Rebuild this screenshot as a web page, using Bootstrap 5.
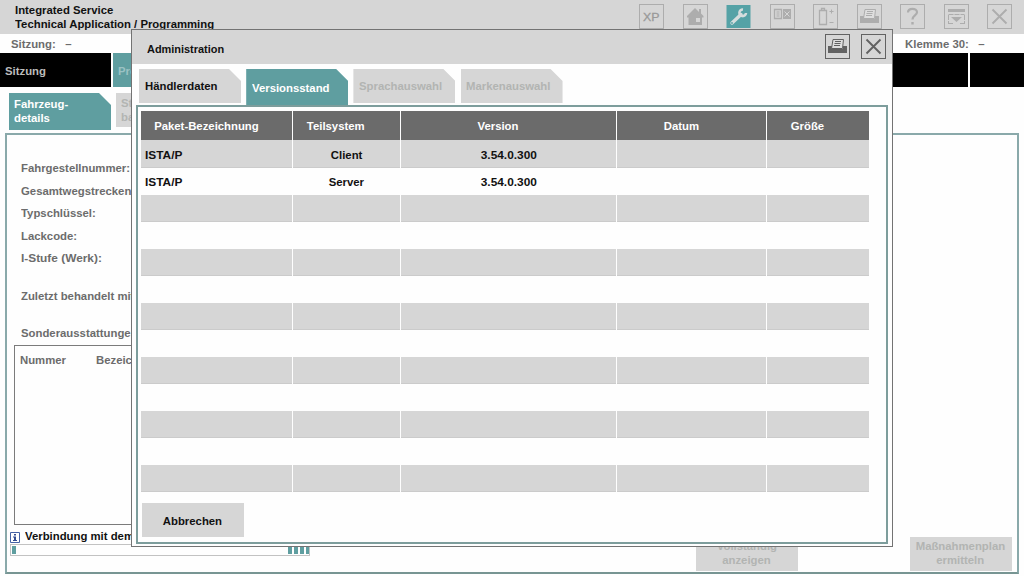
<!DOCTYPE html>
<html lang="de">
<head>
<meta charset="utf-8">
<meta name="viewport" content="width=device-width, initial-scale=1">
<title>Integrated Service – Administration</title>
<link href="https://cdn.jsdelivr.net/npm/bootstrap@5.3.0/dist/css/bootstrap.min.css" rel="stylesheet">
<style>
:root{--teal:#5f9ea0;--grey:#d6d6d6;--line:#7d9d9c}
body{width:1024px;height:576px;background:#fefefe;font:bold 10.5px/14px "Liberation Sans",Arial,sans-serif;color:#111}
.tx{display:inline-block;white-space:nowrap;transform:scaleX(1.08);transform-origin:0 50%}
.text-center .tx,.mid .tx{transform-origin:50% 50%}
.mid .first .tx{transform-origin:0 50%}
.narrow{transform:scaleX(1.04)}
.wide{transform:scaleX(1.13)}
.right-origin{transform-origin:100% 50%}
.dim{color:#6c6c6c}
.off{color:#b2b4b2}
.topbar{height:34px;background:var(--grey);padding:3px 12px 0 15px}
.tools{gap:18.5px;padding-top:1px;color:#adadad}
.tools svg,.dlg-tools svg{width:25px;height:25px;display:block;flex:none}
.info-row{height:19px;padding:3px 39px 0 11px}
.nav-row{height:34px;gap:2px}
.nav-cell{background:#000;color:#bcbcbc;padding:11px 0 0 5px}
.nav-cell.first-cell{width:111px}
.nav-cell.current{width:200px;background:var(--teal);color:#9bc2c4}
.nav-cell.last-cell{width:54px}
.tab-box{width:102px;height:34px;background:var(--grey);clip-path:polygon(0 0,calc(100% - 12px) 0,100% 12px,100% 100%,0 100%)}
.tab-box.on{background:var(--teal);color:#fff}
.side-tabs{height:46px;padding:6px 0 0 9px;gap:5px}
.side-tabs .tab-box{padding:3px 0 0 5px}
.side-tabs .tab-box.on{height:37px;padding-top:4px}
.panel{height:441px;margin:0 5px;border:2px solid #8aa9aa;border-bottom-color:#779593;padding:26px 5px 0 7px}
.fields>div{height:22.5px;padding-left:7px}
.fields>.gap-after{height:37.5px}
.fields>.last-field{height:19px}
.equip{height:180px;width:600px;border:1px solid #7b7b7b;padding:7px 0 0 5px}
.col-num{width:76px}
.status{margin:4px 0 1px -4px}
.status svg{margin:2px 5px 0 0}
.actions{gap:112px;margin-top:12px}
.action-btn{width:102px;height:34px;background:var(--grey);padding:2px 1px 0 0}
.bar-track{width:300px;height:12px;border:1px solid #c2c2c2;padding:1px 0 0 1px;gap:2px;margin-left:-4px}
.bar-track i{width:4px;height:8px;background:var(--teal)}
.bar-track i:last-child{width:3px}
.dlg{left:131px;top:29px;width:762px;height:518px;border:1px solid #737373;background:#fefefe}
.dlg-title{height:34px;background:var(--grey);padding:4px 6px 0 15px}
.dlg-title>.tx{margin-top:8px;height:14px}
.dlg-tools{gap:11px;color:#626262}
.dlg-tabs{height:41px;padding:5px 0 0 7px;gap:5.2px}
.dlg-tabs .tab-box{padding:10px 0 0 6px}
.dlg-tabs .tab-box.off{padding-left:5.500px}
.dlg-tabs .tab-box.on{height:36px;padding-top:12px}
.dlg-body{margin:0 4px;height:439px;border:2px solid var(--line);padding:4px 0 0 3px}
.grid{width:728px;display:grid;grid-template-columns:151px 107px 215px 149px 102px;column-gap:1px;grid-auto-rows:27px;grid-template-rows:29px 28px}
.grid>div{text-align:center;padding-top:8px}
.grid .hd{background:#6b6b6b;color:#fff;padding-right:21px}
.grid .g{background:var(--grey);border-bottom:1px solid #cbcbcb}
.grid .w{padding-top:7px}
.grid .first{text-align:left;padding-left:3.500px}
.cancel{width:102px;height:34px;background:var(--grey);margin:11px 0 0 1px;padding:11px 1px 0 0}
</style>
</head>
<body class="overflow-hidden position-relative m-0">
<svg width="0" height="0" class="d-none">
  <symbol id="printer" viewBox="0 0 25 25"><rect x=".5" y=".5" width="24" height="24" fill="none" stroke="currentColor"/><path d="M3 12h4v3h11v-3h4v7H3z" fill="currentColor"/><path d="M6.500 14.500 8 5.500h10.500l-1 9z" fill="#dedede" stroke="currentColor"/><path d="M10 7.500h6M9.500 9.500h6M9 11.500h6" stroke="currentColor"/></symbol>
  <symbol id="cross" viewBox="0 0 25 25"><rect x=".5" y=".5" width="24" height="24" fill="none" stroke="currentColor"/><path d="m5.500 5.500 14 14m0-14-14 14" stroke="currentColor" stroke-width="1.900"/></symbol>
</svg>
<header class="topbar d-flex justify-content-between">
  <div><div><span class="tx">Integrated Service</span></div><div><span class="tx">Technical Application / Programming</span></div></div>
  <div class="tools d-flex">
    <svg viewBox="0 0 25 25"><rect x=".5" y=".5" width="24" height="24" fill="none" stroke="currentColor"/><text x="4" y="16.500" font-size="11.500" font-weight="normal" textLength="16.500" lengthAdjust="spacingAndGlyphs" fill="#999" stroke="#999" stroke-width=".3">XP</text></svg>
    <svg viewBox="0 0 25 25"><rect x=".5" y=".5" width="24" height="24" fill="none" stroke="currentColor"/><path fill="currentColor" fill-rule="evenodd" d="M12 4 4 12v1.500h1.500V21H19v-7.500h1.500V12L18 9.500V5h-2v3zm1 10h4v4h-4z"/></svg>
    <svg viewBox="0 0 25 25"><path fill="#55a2a6" d="M.5 1h24v23H.5z"/><path d="M6 19 15 10.500" stroke="#d5dddd" stroke-width="3.400" stroke-linecap="round"/><path d="M17 5.500a3.300 3.300 0 1 0 3 3.500" fill="none" stroke="#d5dddd" stroke-width="2.600"/><circle cx="6" cy="19" r=".9" fill="#55a2a6"/></svg>
    <svg viewBox="0 0 25 25"><rect x=".5" y=".5" width="24" height="24" fill="none" stroke="currentColor"/><path d="M4.500 5.500h7v9h-7z" fill="none" stroke="currentColor" stroke-width="1.300"/><path d="M6.500 8h3M6.500 10h3M6.500 12h3" stroke="currentColor"/><path d="M13 5h8v10h-8z" fill="currentColor"/><path d="m14.500 7.500 5 5m0-5-5 5" stroke="#d6d6d6"/></svg>
    <svg viewBox="0 0 25 25"><rect x=".5" y=".5" width="24" height="24" fill="none" stroke="currentColor"/><path d="M6.500 6.500h7v14h-7zM8.500 6V4.500h3V6" fill="none" stroke="currentColor" stroke-width="1.300"/><path d="M16.500 7.500h4M18.500 5.500v4M16.500 18.500h4" stroke="currentColor"/></svg>
    <svg><use href="#printer"/></svg>
    <svg viewBox="0 0 25 25"><rect x=".5" y=".5" width="24" height="24" fill="none" stroke="currentColor"/><path d="M8 8.500C8 3.500 17 3.800 17 8.200c0 3.300-4.500 3.300-4.500 7.300" fill="none" stroke="currentColor" stroke-width="2.200"/><path d="M11.300 18h2.400v2.500h-2.400z" fill="currentColor"/></svg>
    <svg viewBox="0 0 25 25"><rect x=".5" y=".5" width="24" height="24" fill="none" stroke="currentColor"/><path d="M4 5h17v3H4zM7 13h11l-5.500 5z" fill="currentColor"/><path d="M4.500 10.500h16M4.500 11v9M20.500 11v9M4 19.500h5M16 19.500h5" stroke="currentColor" fill="none" stroke-dasharray="5 1"/></svg>
    <svg><use href="#cross"/></svg>
  </div>
</header>
<div class="info-row d-flex justify-content-between dim"><span class="tx">Sitzung: &nbsp; –</span><span class="tx right-origin">Klemme 30: &nbsp; –</span></div>
<nav class="nav-row d-flex"><div class="nav-cell first-cell"><span class="tx">Sitzung</span></div><div class="nav-cell current"><span class="tx">Programmierung</span></div><div class="nav-cell flex-fill"></div><div class="nav-cell last-cell"></div></nav>
<div class="side-tabs d-flex"><div class="tab-box on"><span class="tx">Fahrzeug-</span><br><span class="tx">details</span></div><div class="tab-box off"><span class="tx">Steuergeräte-</span><br><span class="tx">baum</span></div></div>
<main class="panel">
  <div class="fields dim"><div><span class="tx">Fahrgestellnummer:</span></div><div><span class="tx">Gesamtwegstrecken:</span></div><div><span class="tx">Typschlüssel:</span></div><div><span class="tx">Lackcode:</span></div><div class="gap-after"><span class="tx wide">I-Stufe (Werk):</span></div><div class="gap-after"><span class="tx">Zuletzt behandelt mit:</span></div><div class="last-field"><span class="tx">Sonderausstattungen:</span></div></div>
  <div class="equip dim d-flex"><span class="tx col-num">Nummer</span><span class="tx">Bezeichnung</span></div>
  <div class="d-flex justify-content-between">
    <div><div class="status d-flex align-items-center"><svg width="10" height="11" viewBox="0 0 10 11"><path d="M.5.5h9v10h-9z" fill="#fff" stroke="#4561a5"/><path d="M4 2h2v1.500H4zM3 4.500h3V8h1v1H3V8h1V5.500H3z" fill="#304a90"/></svg><span class="tx">Verbindung mit dem Server</span></div>
      <div class="bar-track d-flex"><i class="me-auto"></i><i></i><i></i><i></i><i></i></div></div>
    <div class="actions d-flex text-center off"><div class="action-btn"><span class="tx">Vollständig</span><br><span class="tx">anzeigen</span></div><div class="action-btn"><span class="tx">Maßnahmenplan</span><br><span class="tx">ermitteln</span></div></div>
  </div>
</main>
<section class="dlg position-absolute" role="dialog" aria-label="Administration">
  <div class="dlg-title d-flex justify-content-between"><span class="tx narrow">Administration</span><div class="dlg-tools d-flex"><svg><use href="#printer"/></svg><svg><use href="#cross"/></svg></div></div>
  <div class="dlg-tabs d-flex"><div class="tab-box"><span class="tx">Händlerdaten</span></div><div class="tab-box on"><span class="tx">Versionsstand</span></div><div class="tab-box off"><span class="tx">Sprachauswahl</span></div><div class="tab-box off"><span class="tx">Markenauswahl</span></div></div>
  <div class="dlg-body">
    <div class="grid mid">
      <div class="hd"><span class="tx">Paket-Bezeichnung</span></div><div class="hd"><span class="tx">Teilsystem</span></div><div class="hd"><span class="tx">Version</span></div><div class="hd"><span class="tx">Datum</span></div><div class="hd"><span class="tx">Größe</span></div>
      <div class="g first"><span class="tx wide">ISTA/P</span></div><div class="g"><span class="tx">Client</span></div><div class="g"><span class="tx wide">3.54.0.300</span></div><div class="g"></div><div class="g"></div>
      <div class="w first"><span class="tx wide">ISTA/P</span></div><div class="w"><span class="tx">Server</span></div><div class="w"><span class="tx wide">3.54.0.300</span></div><div></div><div></div>
      <div class="g"></div><div class="g"></div><div class="g"></div><div class="g"></div><div class="g"></div>
      <div></div><div></div><div></div><div></div><div></div>
      <div class="g"></div><div class="g"></div><div class="g"></div><div class="g"></div><div class="g"></div>
      <div></div><div></div><div></div><div></div><div></div>
      <div class="g"></div><div class="g"></div><div class="g"></div><div class="g"></div><div class="g"></div>
      <div></div><div></div><div></div><div></div><div></div>
      <div class="g"></div><div class="g"></div><div class="g"></div><div class="g"></div><div class="g"></div>
      <div></div><div></div><div></div><div></div><div></div>
      <div class="g"></div><div class="g"></div><div class="g"></div><div class="g"></div><div class="g"></div>
      <div></div><div></div><div></div><div></div><div></div>
      <div class="g"></div><div class="g"></div><div class="g"></div><div class="g"></div><div class="g"></div>
    </div>
    <div class="cancel text-center"><span class="tx">Abbrechen</span></div>
  </div>
</section>
<script src="https://cdn.jsdelivr.net/npm/bootstrap@5.3.0/dist/js/bootstrap.bundle.min.js"></script>
</body>
</html>
